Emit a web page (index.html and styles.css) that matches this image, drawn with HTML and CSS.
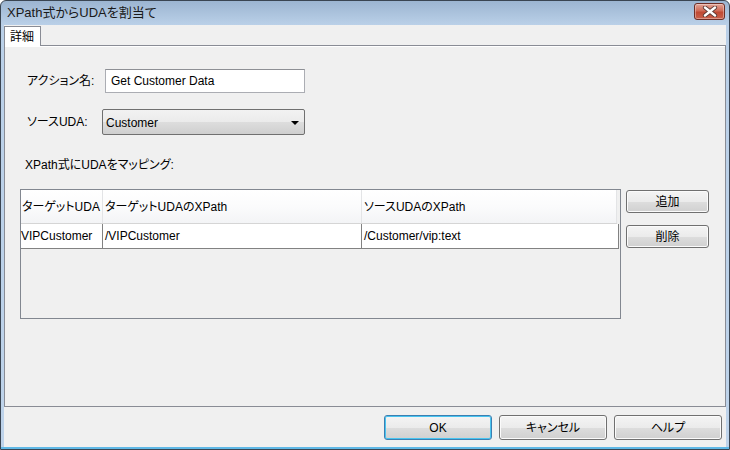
FILE: index.html
```html
<!DOCTYPE html>
<html lang="ja">
<head>
  <meta charset="UTF-8">
  <title>XPath式からUDAを割当て</title>
  <link rel="stylesheet" href="styles.css">
</head>
<body>
  <div class="window">
    <div class="titlebar">
      <span class="title">XPath式からUDAを割当て</span>
      <div class="close-btn">
        <svg width="16" height="11" viewBox="0 0 16 11">
          <path d="M3 1.5 L13 9.5 M13 1.5 L3 9.5" stroke="#5a3a36" stroke-width="4.2" stroke-linecap="round"/>
          <path d="M3 1.5 L13 9.5 M13 1.5 L3 9.5" stroke="#ffffff" stroke-width="2.4" stroke-linecap="round"/>
        </svg>
      </div>
    </div>

    <div class="client">
      <div class="tabs">
        <div class="tab">詳細</div>
      </div>

      <div class="panel">
        <div class="form-row">
          <label>アクション名:</label>
          <div class="textbox">Get Customer Data</div>
        </div>
        <div class="form-row second">
          <label>ソースUDA:</label>
          <div class="combo">
            <span>Customer</span>
            <span class="arrow"></span>
          </div>
        </div>

        <div class="map-label">XPath式にUDAをマッピング:</div>

        <div class="map-area">
          <div class="grid">
            <div class="grid-head">
              <div class="hcell">ターゲットUDA</div>
              <div class="hcell">ターゲットUDAのXPath</div>
              <div class="hcell">ソースUDAのXPath</div>
            </div>
            <div class="grid-row">
              <div class="cell">VIPCustomer</div>
              <div class="cell">/VIPCustomer</div>
              <div class="cell">/Customer/vip:text</div>
            </div>
          </div>
          <div class="side-buttons">
            <div class="btn small">追加</div>
            <div class="btn small">削除</div>
          </div>
        </div>
      </div>

      <div class="footer">
        <div class="btn big default">OK</div>
        <div class="btn big">キャンセル</div>
        <div class="btn big">ヘルプ</div>
      </div>
    </div>
  </div>
</body>
</html>
```

FILE: styles.css
```css
body {
  margin: 0;
  width: 730px;
  height: 450px;
  overflow: hidden;
  font-family: 'Liberation Sans', 'Noto Sans CJK JP', sans-serif;
  font-size: 12px;
  line-height: 14px;
  font-feature-settings: "palt";
  color: #000;
}
.window {
  box-sizing: border-box;
  width: 730px;
  height: 450px;
  border: 1px solid #3a4552;
  border-radius: 6px 6px 0 0;
  background: linear-gradient(#9cb5d1, #bad0e8 24px, #bed3ea);
  padding: 0 3px 2px 3px;
  display: flex;
  flex-direction: column;
  box-shadow: inset 0 -2px 0 #5fb8e6;
}
.titlebar {
  height: 24px;
  display: flex;
  align-items: center;
  justify-content: space-between;
  padding: 0 1px 0 3px;
}
.title {
  font-size: 13px;
  color: #1a1a1a;
  margin-top: -1px;
}
.close-btn {
  width: 29px;
  height: 15px;
  margin-top: -4px;
  border: 1px solid #6e2e26;
  border-radius: 3px;
  background: linear-gradient(#e2a598, #cf6a56 45%, #c04a34 55%, #c9614c);
  display: flex;
  align-items: center;
  justify-content: center;
  box-shadow: inset 0 0 0 1px rgba(255,255,255,0.35);
}
.client {
  flex-grow: 1;
  background-color: #f0f0f0;
  display: flex;
  flex-direction: column;
}
.tabs {
  height: 20px;
  display: flex;
  align-items: flex-end;
}
.tab {
  box-sizing: border-box;
  width: 37px;
  height: 20px;
  margin-bottom: -1px;
  background-color: #fff;
  border: 1px solid #898c95;
  border-bottom: none;
  padding: 3px 0 0 5px;
  position: relative;
  z-index: 1;
}
.panel {
  box-sizing: border-box;
  height: 362px;
  border: 1px solid #898c95;
  box-shadow: inset 0 1px 0 #fff;
  padding: 23px 0 0 15px;
}
.form-row {
  display: flex;
  align-items: center;
  margin-left: 7px;
}
.form-row.second {
  margin-top: 16px;
}
.form-row label {
  width: 78px;
}
.textbox {
  box-sizing: border-box;
  width: 200px;
  height: 24px;
  background-color: #fff;
  border: 1px solid #abadb3;
  border-top-color: #8e9095;
  padding: 4px 0 0 5px;
}
.combo {
  box-sizing: border-box;
  width: 203px;
  height: 26px;
  margin-left: -3px;
  border: 1px solid #707070;
  border-radius: 2px;
  background: linear-gradient(#f2f2f2, #ebebeb 50%, #dddddd 51%, #cfcfcf);
  display: flex;
  align-items: center;
  justify-content: space-between;
  padding: 1px 5px 0 3px;
}
.arrow {
  width: 0;
  height: 0;
  border-left: 4px solid transparent;
  border-right: 4px solid transparent;
  border-top: 4px solid #000;
}
.map-label {
  margin: 23px 0 0 5px;
}
.map-area {
  display: flex;
  gap: 5px;
  margin-top: 17px;
}
.grid {
  box-sizing: border-box;
  width: 601px;
  height: 130px;
  border: 1px solid #828790;
}
.grid-head,
.grid-row {
  display: grid;
  grid-template-columns: 82px 259px 255px;
}
.grid-head {
  height: 33px;
  width: 596px;
  background: linear-gradient(#ffffff, #fbfbfc 50%, #f3f4f6);
  border-bottom: 1px solid #d5d5d5;
}
.hcell {
  display: flex;
  align-items: center;
  padding-left: 2px;
  border-right: 1px solid #e3e4e6;
}
.hcell:first-child {
  padding-left: 1px;
}
.grid-row {
  height: 24px;
  width: 598px;
  grid-template-columns: 82px 259px 257px;
  background-color: #fff;
  border-bottom: 1px solid #828282;
}
.cell {
  display: flex;
  align-items: center;
  padding-left: 2px;
  border-right: 1px solid #828282;
}
.cell:first-child {
  padding-left: 0;
}
.side-buttons {
  display: flex;
  flex-direction: column;
  gap: 12px;
  padding-top: 1px;
}
.btn {
  box-sizing: border-box;
  border: 1px solid #707070;
  border-radius: 3px;
  background: linear-gradient(#f4f4f4, #ebebeb 50%, #dddddd 51%, #d0d0d0);
  box-shadow: inset 0 0 0 1px #fbfbfb;
  display: flex;
  align-items: center;
  justify-content: center;
}
.btn.small {
  width: 83px;
  height: 23px;
}
.btn.big {
  width: 108px;
  height: 25px;
}
.btn.default {
  border-color: #3c7fb1;
  box-shadow: inset 0 0 0 1px #48c4f0;
}
.footer {
  flex-grow: 1;
  display: flex;
  justify-content: flex-end;
  gap: 7px;
  padding: 8px 4px 0 0;
}
```
